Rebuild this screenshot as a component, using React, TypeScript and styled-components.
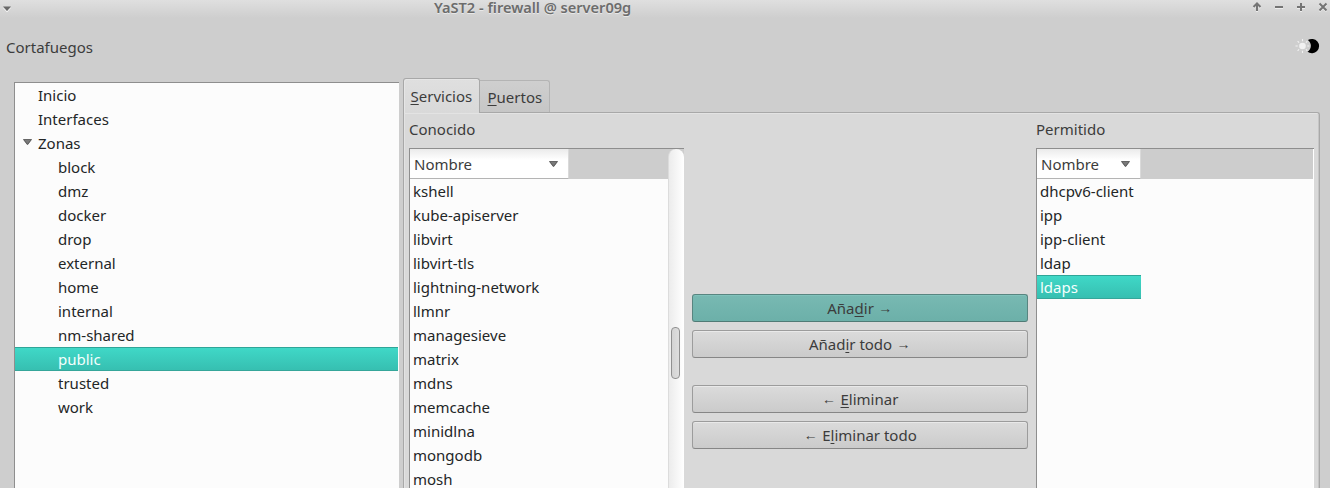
import React from "react";
import styled, { createGlobalStyle, css } from "styled-components";

const Global = createGlobalStyle`
  * { box-sizing: border-box; }
  html, body, #root { height: 100%; }
  body {
    margin: 0;
    overflow: hidden;
    font-family: "Noto Sans", sans-serif;
    font-size: 15px;
    color: #3c3c3c;
    background: #cecece;
  }
`;

const Window = styled.div`
  display: flex;
  flex-direction: column;
  width: 1330px;
  height: 488px;
  overflow: hidden;
  background: #cecece;
`;

const TitleBar = styled.header`
  display: flex;
  align-items: center;
  flex: none;
  height: 18px;
  padding: 0 2px 0 3px;
  background: linear-gradient(#dfdfdf, #cecece);
`;

const Title = styled.h1`
  margin: -3px 0 0 423px;
  font-size: 14.6px;
  letter-spacing: -0.02px;
  line-height: 13px;
  font-weight: 600;
  white-space: nowrap;
  color: #6c6c6c;
  text-shadow: 0 1px 0 #e8e8e8;
`;

const WindowButtons = styled.div`
  display: flex;
  gap: 12px;
  margin: -4px 0 0 auto;
`;

const Glyph = styled.svg`
  display: block;
  flex: none;
`;

const Header = styled.div`
  display: flex;
  align-items: flex-start;
  justify-content: space-between;
  flex: none;
  height: 60px;
  padding: 19px 10px 0 6px;
  line-height: 20px;

  svg { margin-top: 1px; }
`;

const Body = styled.main`
  display: flex;
  flex: 1;
  min-height: 0;
  padding: 0 10px 0 14px;
`;

const Tree = styled.ul`
  flex: none;
  width: 385px;
  margin: 4px 4px 0 0;
  padding: 0;
  list-style: none;
  background: #fcfcfc;
  border: solid #8e8e8e;
  border-width: 1px 0 0 1px;
`;

const selected = css`
  color: #f4fffd;
  background: linear-gradient(#40d9c8, #36beb0);
  box-shadow: inset 0 1px #2fa598, inset 0 -1px #35a69a;
`;

const TreeItem = styled.li<{ $level: number; $selected?: boolean }>`
  display: flex;
  align-items: center;
  height: 24px;
  margin-right: 1px;
  padding: 0 0 0 ${(p) => (p.$level ? 43 : 8)}px;
  line-height: 24px;
  color: #232627;
  ${(p) => p.$selected && selected}
`;

const Expander = styled.span`
  flex: none;
  width: 15px;
  margin-top: -2px;
`;

const Tabs = styled.section`
  display: flex;
  flex-direction: column;
  width: 917px;
`;

const TabBar = styled.div`
  position: relative;
  display: flex;
  align-items: flex-end;
  flex: none;
  height: 35px;
  margin-bottom: -1px;
`;

const Tab = styled.div<{ $active?: boolean }>`
  width: ${(p) => (p.$active ? 77 : 70)}px;
  height: ${(p) => (p.$active ? 35 : 32)}px;
  margin-bottom: ${(p) => (p.$active ? 0 : 1)}px;
  padding: ${(p) => (p.$active ? "6px 0 0 6.5px" : "5px 0 0 7.5px")};
  line-height: 22px;
  border: 1px solid ${(p) => (p.$active ? "#a8a8a8" : "#b4b4b4")};
  border-left-width: ${(p) => (p.$active ? 1 : 0)}px;
  border-bottom: 0;
  border-radius: ${(p) => (p.$active ? "3px 3px 0 0" : "0 3px 0 0")};
  background: ${(p) => (p.$active ? "linear-gradient(#dfdfdf, #d9d9d9)" : "linear-gradient(#cfcfcf, #c6c6c6)")};
  box-shadow: ${(p) => (p.$active ? "inset 1px 1px #e6e6e6" : "none")};
`;

const Page = styled.div`
  display: flex;
  flex: 1;
  min-height: 0;
  padding: 5px 5px 0;
  border: 1px solid #a8a8a8;
  border-bottom: 0;
  border-radius: 0 3px 0 0;
  background: #d9d9d9;
  box-shadow: inset 1px 1px #e3e3e3, inset -1px 0 #c5c5c5;
`;

const Mnemonic = styled.span`
  text-decoration: underline;
  text-decoration-thickness: 1px;
  text-underline-offset: 2px;
  text-decoration-skip-ink: none;
`;

const Column = styled.div<{ $width: number }>`
  display: flex;
  flex-direction: column;
  flex: none;
  width: ${(p) => p.$width}px;
`;

const Label = styled.div`
  flex: none;
  height: 30px;
  line-height: 22px;
`;

const ListBox = styled.div`
  display: flex;
  flex: 1;
  min-height: 0;
  border: solid #8e8e8e;
  border-width: 1px 0 0 1px;
  background: #fcfcfc;
`;

const Table = styled.div`
  flex: 1;
  min-width: 0;
`;

const TableHead = styled.div`
  height: 30px;
  background: #cdcdcd;
`;

const HeadCell = styled.div<{ $width: number }>`
  display: flex;
  align-items: center;
  justify-content: space-between;
  width: ${(p) => p.$width}px;
  height: 30px;
  padding: 0 10px 0 4px;
  background: linear-gradient(#ebebeb, #ffffff 11px);
  border: solid #b4b4b4;
  border-width: 0 1px 1px 0;
  border-right-color: #dadada;
  line-height: 22px;
`;

const Row = styled.div<{ $width: number; $selected?: boolean }>`
  width: ${(p) => p.$width}px;
  height: 24px;
  padding: 0 0 0 3px;
  line-height: 24px;
  white-space: nowrap;
  color: #232627;
  ${(p) => p.$selected && selected}
`;

const ScrollTrack = styled.div`
  flex: none;
  width: 16px;
  padding: 178px 4px 0 3px;
  border-left: 1px solid #dcdcdc;
  border-radius: 8px 8px 0 0;
  background: linear-gradient(90deg, #ececec, #ffffff);
`;

const ScrollCorner = styled.div`
  display: flex;
  flex: none;
  background: #cdcdcd;
`;

const ScrollThumb = styled.div`
  width: 9px;
  height: 52px;
  margin-left: -1px;
  border: 1px solid #909090;
  border-radius: 4px;
  background: linear-gradient(90deg, #d3d3d3, #dedede);
`;

const Edge = styled.div`
  flex: none;
  width: 1px;
  background: #ffffff;
`;

const Actions = styled.div`
  display: flex;
  flex-direction: column;
  gap: 8px;
  flex: none;
  width: 336px;
  margin: 176px 8px 0;
`;

const Button = styled.button<{ $hot?: boolean; $spaced?: boolean }>`
  height: 28px;
  margin: ${(p) => (p.$spaced ? 19 : 0)}px 0 0;
  padding: 0 0 1px;
  font: inherit;
  line-height: 22px;
  color: #3c3c3c;
  border: 1px solid ${(p) => (p.$hot ? "#588580" : "#9c9c9c")};
  border-bottom-color: ${(p) => (p.$hot ? "#507b76" : "#868686")};
  border-radius: 3px;
  background: ${(p) => (p.$hot ? "linear-gradient(#78b9b2, #6cb0a9)" : "linear-gradient(#dbdbdb, #cbcbcb)")};
  box-shadow: inset 0 1px ${(p) => (p.$hot ? "#80c2bb" : "#e9e9e9")};
`;

const Arrow = styled.span`
  display: inline-block;
  width: 15px;
  font-family: "Liberation Sans", sans-serif;
  font-size: 14px;
  line-height: 14px;
  text-align: center;
  vertical-align: 1px;
`;

const DownArrow = () => (
  <Glyph width="9" height="6" viewBox="0 0 9 6">
    <path d="M0.3 0.5H8.7L5.2 5.5H3.8Z" fill="#7a7a7a" />
    <path d="M0.5 0.5L4.5 5.5L8.5 0.5Z" stroke="#505050" strokeWidth="0.8" fill="none" />
  </Glyph>
);

const ThemeIcon = () => (
  <Glyph width="25" height="16" viewBox="0 0 25 16">
    <g stroke="#f2f2f2" strokeWidth="1.1">
      <path d="M7.5 1V3.2M7.5 12.8V15M0.5 8H2.7M12.3 8H14.3M2.6 3.1L4.1 4.6M10.9 11.4L12.4 12.9M2.6 12.9L4.1 11.4M10.9 4.6L12.4 3.1" />
    </g>
    <circle cx="7.5" cy="8" r="3.3" fill="#f2f2f2" />
    <path d="M12.9 2.1A7.2 7.2 0 1 1 12.5 13.8A7 7 0 0 0 12.9 2.1Z" fill="#000" />
  </Glyph>
);

const controls = ["M5 9V2M1.5 5L5 1.5L8.5 5", "M1 5H9", "M1 5H9M5 1V9", "M1.5 1.5L8.5 8.5M8.5 1.5L1.5 8.5"];

const zones = ["block", "dmz", "docker", "drop", "external", "home", "internal", "nm-shared", "public", "trusted", "work"];
const known = [
  "kshell", "kube-apiserver", "libvirt", "libvirt-tls", "lightning-network", "llmnr", "managesieve",
  "matrix", "mdns", "memcache", "minidlna", "mongodb", "mosh",
];
const allowed = ["dhcpv6-client", "ipp", "ipp-client", "ldap", "ldaps"];

export default function App() {
  return (
    <Window>
      <Global />
      <TitleBar>
        <Glyph width="8" height="6" viewBox="0 0 8 6">
          <path d="M0.5 2L4 6L7.5 2" stroke="#f2f2f2" fill="none" />
          <path d="M0 0.5H8L4 5Z" fill="#686868" />
        </Glyph>
        <Title>YaST2 - firewall @ server09g</Title>
        <WindowButtons>
          {controls.map((d) => (
            <Glyph key={d} width="10" height="10" viewBox="0 0 10 10" fill="none">
              <path d={d} stroke="#ededed" strokeWidth="2" transform="translate(0 1)" />
              <path d={d} stroke="#747474" strokeWidth="2" />
            </Glyph>
          ))}
        </WindowButtons>
      </TitleBar>
      <Header>
        <span>Cortafuegos</span>
        <ThemeIcon />
      </Header>
      <Body>
        <Tree>
          {["Inicio", "Interfaces", "Zonas"].map((name) => (
            <TreeItem key={name} $level={0}>
              <Expander>{name === "Zonas" && <DownArrow />}</Expander>
              {name}
            </TreeItem>
          ))}
          {zones.map((zone) => (
            <TreeItem key={zone} $level={1} $selected={zone === "public"}>{zone}</TreeItem>
          ))}
        </Tree>
        <Tabs>
          <TabBar>
            <Tab $active><Mnemonic>S</Mnemonic>ervicios</Tab>
            <Tab><Mnemonic>P</Mnemonic>uertos</Tab>
          </TabBar>
          <Page>
            <Column $width={275}>
              <Label>Conocido</Label>
              <ListBox>
                <Table>
                  <TableHead><HeadCell $width={159}>Nombre<DownArrow /></HeadCell></TableHead>
                  {known.map((name) => <Row key={name} $width={159}>{name}</Row>)}
                </Table>
                <ScrollCorner><ScrollTrack><ScrollThumb /></ScrollTrack></ScrollCorner>
              </ListBox>
            </Column>
            <Actions>
              <Button $hot>Aña<Mnemonic>d</Mnemonic>ir <Arrow>→</Arrow></Button>
              <Button>Añad<Mnemonic>i</Mnemonic>r todo <Arrow>→</Arrow></Button>
              <Button $spaced><Arrow>←</Arrow> <Mnemonic>E</Mnemonic>liminar</Button>
              <Button><Arrow>←</Arrow> E<Mnemonic>l</Mnemonic>iminar todo</Button>
            </Actions>
            <Column $width={278}>
              <Label>Permitido</Label>
              <ListBox>
                <Table>
                  <TableHead><HeadCell $width={104}>Nombre<DownArrow /></HeadCell></TableHead>
                  {allowed.map((name) => <Row key={name} $width={104} $selected={name === "ldaps"}>{name}</Row>)}
                </Table>
                <Edge />
              </ListBox>
            </Column>
          </Page>
        </Tabs>
      </Body>
    </Window>
  );
}
